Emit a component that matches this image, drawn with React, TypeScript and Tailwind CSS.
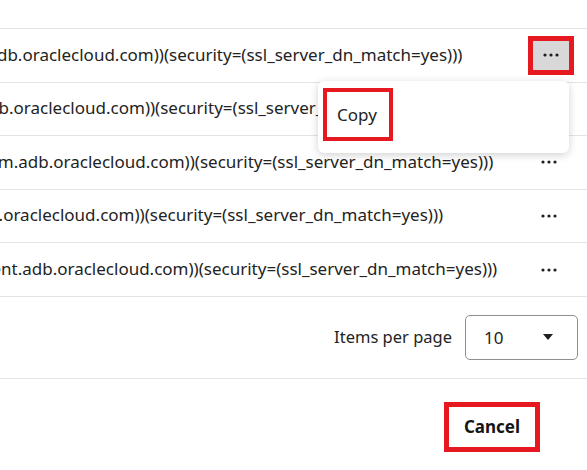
import { useState } from "react";

const rows = [
  "high.adb.oraclecloud.com))(security=(ssl_server_dn_match=yes)))",
  "low.adb.oraclecloud.com))(security=(ssl_server_dn_match=yes)))",
  "medium.adb.oraclecloud.com))(security=(ssl_server_dn_match=yes)))",
  "tp.adb.oraclecloud.com))(security=(ssl_server_dn_match=yes)))",
  "tpurgent.adb.oraclecloud.com))(security=(ssl_server_dn_match=yes)))",
];

function Dots() {
  return (
    <svg width="16" height="4" viewBox="0 0 16 4" className="fill-[#1f1f1f]">
      <circle cx="2" cy="2" r="1.6" />
      <circle cx="8" cy="2" r="1.6" />
      <circle cx="14" cy="2" r="1.6" />
    </svg>
  );
}

export default function App() {
  const [perPage] = useState(10);

  return (
    <div
      className="w-[587px] h-[470px] bg-white text-[#232323] overflow-hidden"
      style={{ fontFamily: '"Noto Sans", "Open Sans", sans-serif' }}
    >
      <div className="h-7" />
      <div className="border-b border-[#e4e4e4]">
        {rows.map((r, i) => (
          <div
            key={r}
            className="relative flex items-center h-[53.6px] border-t border-[#e4e4e4]"
          >
            <div className="flex-1 overflow-hidden">
              <div className="-ml-[53px] -mt-[2px] whitespace-nowrap text-[17px]">{r}</div>
            </div>
            <div className="w-[70px] flex justify-center shrink-0">
              {i === 0 ? (
                <div className="border-[5px] border-[#e5191f] -ml-[2px]">
                  <div className="w-[36px] h-[29px] bg-[#d8d8d8] flex items-center justify-center">
                    <Dots />
                  </div>
                </div>
              ) : (
                <div className="-ml-[6px] flex">
                  <Dots />
                </div>
              )}
            </div>
            {i === 0 && (
              <div className="absolute top-[52px] right-[18px] w-[251px] h-[72px] bg-white rounded-md shadow-[0_2px_8px_rgba(0,0,0,0.18)] z-10 pl-[5px] pt-[7px]">
                <div className="w-[70px] h-[53px] border-[4px] border-[#e5191f] flex items-center pl-[10px] text-[17px]">
                  Copy
                </div>
              </div>
            )}
          </div>
        ))}
      </div>
      <div className="h-[82px] flex items-center justify-end pr-[9px] border-b border-[#e4e4e4]">
        <span className="text-[16.5px] mr-[13px]">Items per page</span>
        <div className="w-[113px] h-[45px] border border-[#8f8f8f] rounded-[5px] flex items-center justify-between pl-[18px] pr-[24px] text-[17px]">
          <span>{perPage}</span>
          <svg width="10" height="6" viewBox="0 0 10 6" className="fill-[#1f1f1f]">
            <path d="M0 0h10L5 6z" />
          </svg>
        </div>
      </div>
      <div className="flex justify-end pr-[47px] pt-[23px]">
        <button className="w-[96px] h-[50px] border-[5px] border-[#e5191f] text-[17px] font-bold text-[#161513] flex items-center justify-center">
          Cancel
        </button>
      </div>
    </div>
  );
}
